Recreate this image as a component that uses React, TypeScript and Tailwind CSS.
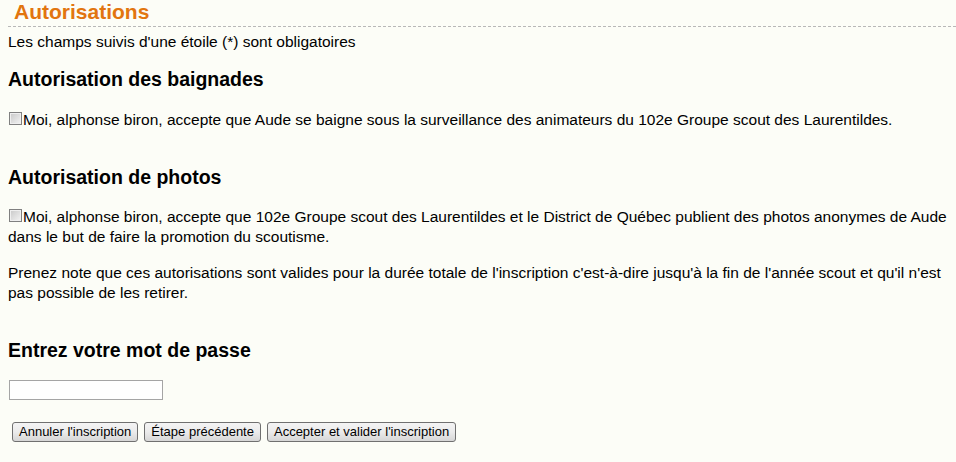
import React from "react";

function Box() {
  return (
    <span className="inline-block w-[13px] h-[13px] ml-px mr-px align-baseline border border-[#808080] bg-gradient-to-br from-[#c8c8c8] to-[#f4f4f4] shadow-[inset_0_0_0_1px_#efefef]" />
  );
}

function Btn({ children }: { children: React.ReactNode }) {
  return (
    <button className="h-[20px] px-[6px] border border-[#707070] rounded-[3px] bg-gradient-to-b from-[#f4f4f4] via-[#ebebeb] to-[#d6d6d6] text-[13px] leading-[18px] text-black">
      {children}
    </button>
  );
}

export default function App() {
  return (
    <div className="min-h-[462px] w-[956px] bg-[#fcfdf7] text-black font-['Liberation_Sans',Arial,sans-serif] overflow-hidden">
      <div className="ml-2 pl-[6px] pb-[2px] border-b border-dashed border-[#b8b8b8]">
        <h1 className="text-[21px] leading-[24px] font-bold text-[#e2750f]">Autorisations</h1>
      </div>
      <div className="pl-2 text-[15.5px] leading-[20px]">
        <p className="mt-[5px]">Les champs suivis d'une étoile (*) sont obligatoires</p>
        <h2 className="mt-[15px] text-[19.5px] leading-[24px] font-bold">Autorisation des baignades</h2>
        <p className="mt-[19px]">
          <Box />Moi, alphonse biron, accepte que Aude se baigne sous la surveillance des animateurs du 102e Groupe scout des Laurentildes.
        </p>
        <h2 className="mt-[35px] text-[19.5px] leading-[24px] font-bold">Autorisation de photos</h2>
        <p className="mt-[18px]">
          <Box />Moi, alphonse biron, accepte que 102e Groupe scout des Laurentildes et le District de Québec publient des photos anonymes de Aude dans le but de faire la promotion du scoutisme.
        </p>
        <p className="mt-[16px]">
          Prenez note que ces autorisations sont valides pour la durée totale de l'inscription c'est-à-dire jusqu'à la fin de l'année scout et qu'il n'est pas possible de les retirer.
        </p>
        <h2 className="mt-[35px] text-[19.5px] leading-[24px] font-bold">Entrez votre mot de passe</h2>
        <div className="mt-[18px]">
          <input type="password" className="ml-px block w-[154px] h-[20px] border border-[#a5a5a5] bg-white outline-none" />
        </div>
        <div className="mt-[22px] ml-[4px] flex gap-[6px]">
          <Btn>Annuler l'inscription</Btn>
          <Btn>Étape précédente</Btn>
          <Btn>Accepter et valider l'inscription</Btn>
        </div>
      </div>
    </div>
  );
}
